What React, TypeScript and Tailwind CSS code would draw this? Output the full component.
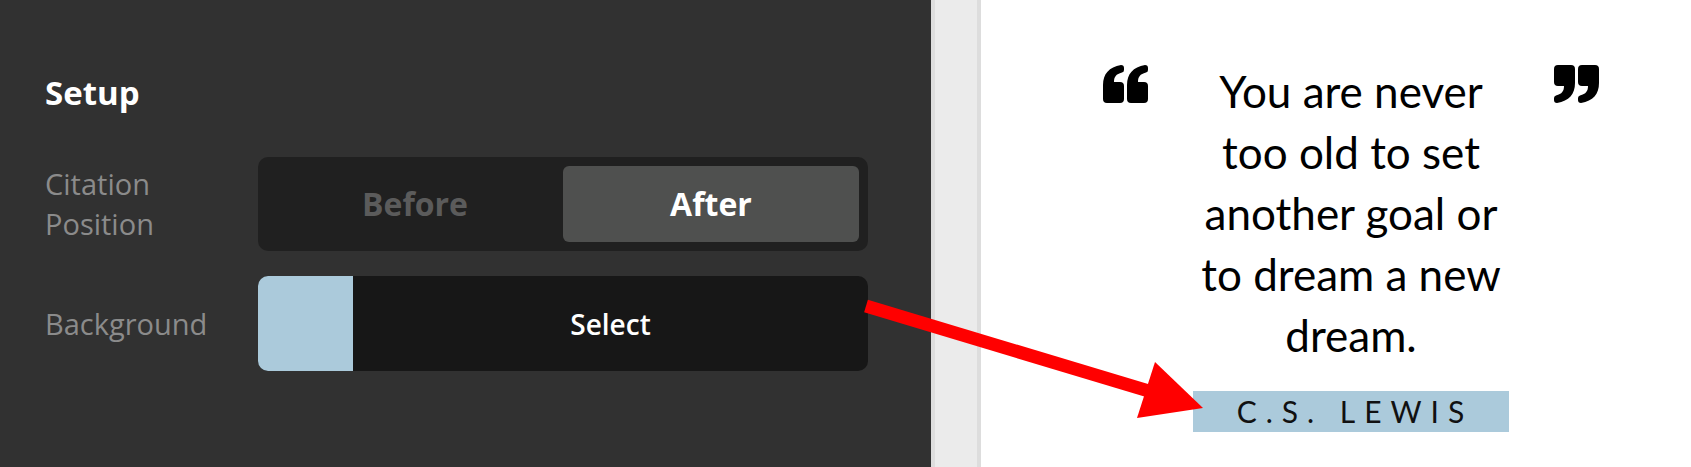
import React from "react";

const ui = { fontFamily: '"Open Sans", "Noto Sans", sans-serif' };
const lato = { fontFamily: 'Lato, "Open Sans", sans-serif' };

function QuoteMark({ close }: { close?: boolean }) {
  const mark =
    "M0 34 V20 C0 9 6 2 18 0 Q21 0 21 3 V5 Q21 7 19 7.5 C13 9 11 12 11 17 H17 Q21 17 21 21 V34 Q21 38 17 38 H4 Q0 38 0 34 Z";
  return (
    <svg width="45" height="38" viewBox="0 0 45 38" className="shrink-0 mt-[4px]">
      <g transform={close ? "rotate(180 22.5 19)" : undefined} fill="#000">
        <path d={mark} />
        <path d={mark} transform="translate(24 0)" />
      </g>
    </svg>
  );
}

function Row({ label, children }: { label: React.ReactNode; children: React.ReactNode }) {
  return (
    <div className="flex items-center">
      <div className="w-[213px] shrink-0 text-[29px] leading-[40px] text-[#8b8b8b]">{label}</div>
      <div className="w-[610px]">{children}</div>
    </div>
  );
}

export default function App() {
  return (
    <div className="relative flex w-[1691px] h-[467px] overflow-hidden bg-white">
      {/* Settings panel */}
      <div className="w-[931px] shrink-0 bg-[#313131] pl-[45px] pt-[73px]" style={ui}>
        <h2 className="text-[33px] leading-[40px] font-bold text-white">Setup</h2>

        <div className="mt-[44px] flex flex-col gap-[25px]">
          <Row
            label={
              <>
                Citation
                <br />
                Position
              </>
            }
          >
            <div className="grid grid-cols-2 h-[94px] p-[9px] rounded-[10px] bg-[#202020]">
              <button className="text-[32px] font-bold text-[#5b5b5b]">Before</button>
              <button className="text-[32px] font-bold text-white bg-[#4f504f] rounded-[6px]">
                After
              </button>
            </div>
          </Row>

          <Row label="Background">
            <div className="flex h-[95px] rounded-[10px] bg-[#171717] overflow-hidden">
              <div className="w-[95px] shrink-0 bg-[#abcadb]" />
              <button className="flex-1 text-[28px] font-semibold text-white">Select</button>
            </div>
          </Row>
        </div>
      </div>

      {/* Divider strip */}
      <div className="w-[50px] shrink-0 bg-[#ebebeb] border-x-[4px] border-[#dddddd]" />

      {/* Preview */}
      <div className="flex-1 pl-[122px] pt-[61px]">
        <div className="flex items-start gap-[48px]">
          <QuoteMark />
          <div className="w-[310px] flex flex-col items-center" style={lato}>
            <p className="text-[44px] leading-[61px] text-black text-center">
              You are never too old to set another goal or to dream a new dream.
            </p>
            <div className="mt-[25px] w-[316px] h-[41px] bg-[#abcadb] text-center pl-[8px] text-[30px] leading-[41px] font-normal tracking-[9px] text-[#111]">
              C.S. LEWIS
            </div>
          </div>
          <QuoteMark close />
        </div>
      </div>

      {/* Annotation arrow */}
      <svg className="absolute inset-0 pointer-events-none" width="1691" height="467">
        <line x1="866" y1="306" x2="1152" y2="392" stroke="#ff0000" strokeWidth="13" />
        <polygon points="1203,408 1155,362 1137,418" fill="#ff0000" />
      </svg>
    </div>
  );
}
